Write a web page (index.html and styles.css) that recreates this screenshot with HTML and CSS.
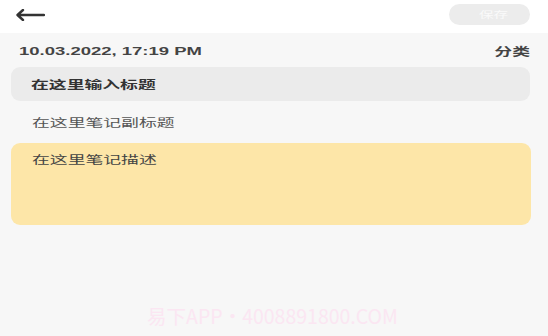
FILE: index.html
```html
<!DOCTYPE html>
<html lang="zh">
<head>
<meta charset="utf-8">
<link rel="stylesheet" href="styles.css">
</head>
<body>
<div class="page">
  <header class="topbar">
    <svg class="back" width="30" height="12" viewBox="0 0 30 12">
      <path d="M29 6H3M8 1L2.5 6L8 11" fill="none" stroke="#333" stroke-width="2.4" stroke-linecap="round" stroke-linejoin="round"/>
    </svg>
    <button class="save"><span class="wide">保存</span></button>
  </header>
  <main class="content">
    <div class="meta">
      <span class="date wide">10.03.2022, 17:19 PM</span>
      <span class="cat wide-r">分类</span>
    </div>
    <div class="title-box"><span class="wide">在这里输入标题</span></div>
    <div class="subtitle"><span class="wide">在这里笔记副标题</span></div>
    <div class="desc"><span class="wide">在这里笔记描述</span></div>
    <div class="watermark">易下APP・4008891800.COM</div>
  </main>
</div>
</body>
</html>
```
FILE: styles.css
```css
* { box-sizing: border-box; }
html, body { margin: 0; padding: 0; }
body {
  width: 548px;
  height: 336px;
  background: #f7f7f7;
  font-family: "Noto Sans CJK SC", "Noto Sans", sans-serif;
  color: #333;
  overflow: hidden;
}
.page { display: flex; flex-direction: column; height: 336px; }
.wide {
  display: inline-block;
  transform: scaleX(1.62);
  transform-origin: left center;
  white-space: nowrap;
}
.wide-r {
  display: inline-block;
  transform: scaleX(1.62);
  transform-origin: right center;
  white-space: nowrap;
}
.topbar {
  height: 33px;
  background: #ffffff;
  display: flex;
  align-items: center;
  justify-content: space-between;
  padding: 0 18px 0 15px;
}
.back { display: block; margin-top: -4px; }
.save {
  width: 81px;
  height: 21px;
  border: none;
  border-radius: 11px;
  background: #ececec;
  color: #fafafa;
  font-family: inherit;
  font-size: 9px;
  padding: 0 0 0 30px;
  margin-top: -4px;
  text-align: left;
}
.content {
  flex: 1;
  display: flex;
  flex-direction: column;
  padding: 0 18px 0 11px;
}
.meta {
  display: flex;
  justify-content: space-between;
  align-items: center;
  height: 34px;
  padding: 2px 0 0 8px;
}
.date {
  font-family: "Liberation Sans", Arial, sans-serif;
  font-size: 11px;
  font-weight: 700;
  color: #444;
  transform: scaleX(1.68);
}
.cat { font-size: 11px; font-weight: 700; color: #444; }
.title-box {
  height: 34px;
  background: #ebebeb;
  border-radius: 9px;
  display: flex;
  align-items: center;
  padding-left: 20px;
  font-size: 11px;
  font-weight: 700;
  color: #333;
}
.subtitle {
  height: 42px;
  display: flex;
  align-items: center;
  padding-left: 21px;
  font-size: 11px;
  color: #555;
}
.desc {
  height: 82px;
  background: #fde6a8;
  border-radius: 9px;
  padding: 8px 21px;
  font-size: 11px;
  color: #444;
  margin-right: -1px;
}
.watermark {
  margin-top: auto;
  margin-bottom: 6px;
  align-self: center;
  font-size: 19.5px;
  color: #fbe6f2;
  margin-left: 4px;
  font-family: "Noto Sans CJK SC", "Noto Sans", sans-serif;
}
```
